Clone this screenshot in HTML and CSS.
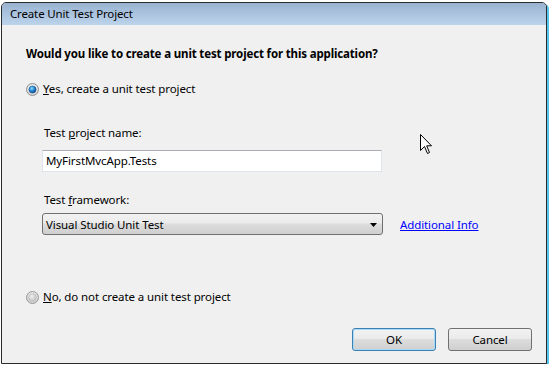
FILE: index.html
```html
<!DOCTYPE html>
<html>
<head>
<meta charset="utf-8">
<link rel="stylesheet" href="styles.css">
</head>
<body>
<div class="window">
  <div class="titlebar">Create Unit Test Project</div>
  <div class="content">
    <div class="question">Would you like to create a unit test project for this application?</div>
    <div class="radio-row yes">
      <svg class="radio" width="13" height="13" viewBox="0 0 13 13">
        <defs>
          <radialGradient id="ring" cx="50%" cy="35%" r="60%">
            <stop offset="0" stop-color="#ffffff"/>
            <stop offset="1" stop-color="#d4d4d4"/>
          </radialGradient>
          <radialGradient id="dot" cx="40%" cy="35%" r="65%">
            <stop offset="0" stop-color="#8fe0ff"/>
            <stop offset="0.5" stop-color="#2b8fd6"/>
            <stop offset="1" stop-color="#0b3f8a"/>
          </radialGradient>
        </defs>
        <circle cx="6.5" cy="6.5" r="6" fill="url(#ring)" stroke="#8e8f8f" stroke-width="1"/>
        <circle cx="6.5" cy="6.5" r="3.6" fill="url(#dot)" stroke="#1c5d9a" stroke-width="0.6"/>
      </svg>
      <span><u>Y</u>es, create a unit test project</span>
    </div>
    <div class="sub">
      <div class="label">Test <u>p</u>roject name:</div>
      <div class="textbox">MyFirstMvcApp.Tests</div>
      <div class="label fw">Test <u>f</u>ramework:</div>
      <div class="select-row">
        <div class="select">
          <span>Visual Studio Unit Test</span>
          <svg class="arrow" width="7" height="4" viewBox="0 0 7 4"><path d="M0 0H7L3.5 4Z" fill="#000"/></svg>
        </div>
        <a class="link" href="#">Additional Info</a>
      </div>
    </div>
    <div class="radio-row no">
      <svg class="radio" width="13" height="13" viewBox="0 0 13 13">
        <defs>
          <radialGradient id="ring2" cx="50%" cy="35%" r="60%">
            <stop offset="0" stop-color="#f4f4f4"/>
            <stop offset="1" stop-color="#cfcfcf"/>
          </radialGradient>
          <radialGradient id="dot2" cx="40%" cy="35%" r="65%">
            <stop offset="0" stop-color="#f0f0f0"/>
            <stop offset="1" stop-color="#c4c4c4"/>
          </radialGradient>
        </defs>
        <circle cx="6.5" cy="6.5" r="6" fill="url(#ring2)" stroke="#9a9a9a" stroke-width="1"/>
        <circle cx="6.5" cy="6.5" r="3.8" fill="url(#dot2)" stroke="#b5b5b5" stroke-width="0.6"/>
      </svg>
      <span><u>N</u>o, do not create a unit test project</span>
    </div>
    <div class="buttons">
      <div class="btn default">OK</div>
      <div class="btn">Cancel</div>
    </div>
  </div>
  <svg class="cursor" width="12" height="20" viewBox="0 0 12 20">
    <path d="M0.5 0.5V16.5L4.5 12.5L7.5 19.5L9.5 18.5L6.7 11.8H11.5Z" fill="#fff" stroke="#000" stroke-width="1" stroke-linejoin="miter"/>
  </svg>
</div>
</body>
</html>
```
FILE: styles.css
```css
html, body {
  margin: 0;
  padding: 0;
  background: #ffffff;
}
body {
  font-family: "Noto Sans", "Open Sans", sans-serif;
  font-size: 11.5px;
  letter-spacing: -0.1px;
  color: #000;
}
.window {
  position: relative;
  margin: 2px 0 0 1px;
  width: 544px;
  height: 360px;
  border: 1px solid #2b2b2b;
  border-radius: 5px 5px 0 0;
  background: #f0f0f0;
  box-shadow: 2px 2px 0 #55c6ee;
}
.titlebar {
  height: 22px;
  line-height: 22px;
  padding-left: 8px;
  background: linear-gradient(#98b2cf, #bdd3ec);
  border-radius: 4px 4px 0 0;
  color: #000;
  font-size: 11.5px;
  letter-spacing: -0.15px;
}
.content {
  padding: 21px 0 0 24px;
}
.question {
  font-weight: bold;
  font-size: 11.5px;
  letter-spacing: -0.15px;
  line-height: 16px;
  height: 16px;
}
.radio-row {
  display: flex;
  align-items: center;
  gap: 4px;
  height: 16px;
  line-height: 16px;
}
.radio-row.yes {
  margin-top: 19px;
}
.radio-row.no {
  margin-top: 54px;
}
.radio {
  flex: none;
}
.sub {
  padding-left: 16px;
}
.label {
  line-height: 16px;
  height: 16px;
  padding-left: 2px;
}
.sub > .label:first-child {
  margin-top: 28px;
}
.label.fw {
  margin-top: 20px;
}
.textbox {
  box-sizing: border-box;
  margin-top: 9px;
  width: 340px;
  height: 22px;
  line-height: 20px;
  padding-left: 3px;
  background: #fff;
  border: 1px solid #dfe3ea;
  border-top-color: #abadb3;
}
.select-row {
  display: flex;
  align-items: center;
  margin-top: 5px;
  gap: 17px;
}
.select {
  box-sizing: border-box;
  width: 341px;
  height: 22px;
  display: flex;
  align-items: center;
  justify-content: space-between;
  padding: 0 5px 0 3px;
  border: 1px solid #707070;
  border-radius: 3px;
  background: linear-gradient(#f2f2f2 0%, #ebebeb 45%, #dddddd 50%, #cfcfcf 100%);
}
.arrow {
  margin-top: 1px;
}
.link {
  color: #0000ff;
  text-decoration: underline;
}
.buttons {
  display: flex;
  justify-content: flex-end;
  gap: 12px;
  margin-top: 23px;
  padding-right: 14px;
}
.btn {
  box-sizing: border-box;
  width: 84px;
  height: 23px;
  line-height: 21px;
  text-align: center;
  border: 1px solid #707070;
  border-radius: 3px;
  background: linear-gradient(#f2f2f2 0%, #ebebeb 45%, #dddddd 50%, #cfcfcf 100%);
}
.btn.default {
  border-color: #3c7fb1;
  box-shadow: inset 0 0 0 1px #a6dcf5;
}
.cursor {
  position: absolute;
  left: 418px;
  top: 131px;
}
```
